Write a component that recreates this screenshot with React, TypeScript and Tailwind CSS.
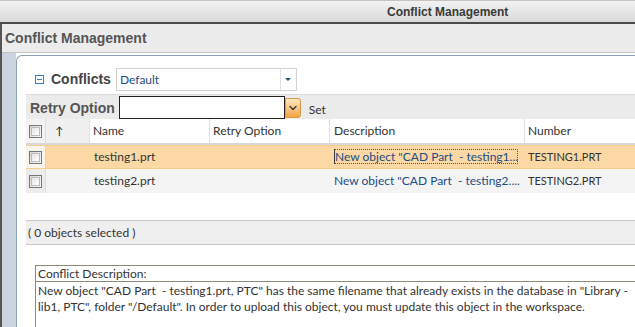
import { ChevronDown } from "lucide-react"

const rows = [
  { name: "testing1.prt", desc: 'New object "CAD Part  - testing1...', number: "TESTING1.PRT", selected: true },
  { name: "testing2.prt", desc: 'New object "CAD Part  - testing2....', number: "TESTING2.PRT", selected: false },
]

export default function App() {
  return (
    <div className="w-[635px] h-[327px] overflow-hidden bg-white flex flex-col font-['Liberation_Sans',Arial,sans-serif]">
      {/* window title */}
      <div className="h-[24px] shrink-0 bg-gradient-to-b from-[#f2f2f2] to-[#d9d9d9] border-t border-[#c4c4c4] border-b-2 border-b-[#4a4a4a] flex items-center pl-[387px] text-[12px] font-bold text-[#3a3a3a]">
        Conflict Management
      </div>

      <div className="flex-1 min-h-0 flex flex-col border-l-2 border-[#555]">
        <div className="h-[29px] shrink-0 bg-[#ececec] border-b border-[#c3c3c3] flex items-center pl-[3px] text-[14px] font-bold text-[#555]">
          Conflict Management
        </div>

        <div className="flex-1 min-h-0 flex">
          <div className="w-[14px] shrink-0 bg-[#cbd4de]" />
          <div className="flex-1 mt-[2px] bg-white border-l border-t border-[#8ea5bb] rounded-tl-[6px] pl-[9px] pt-[12px] flex flex-col">
            <ConflictsRow />
            <Toolbar />
            <Table />
            <div className="h-[27px] shrink-0" />
            <div className="h-[25px] shrink-0 bg-[#efefef] border-y border-[#c8c8c8] flex items-center pl-[2px] text-[12px] text-[#333] font-['Lato',sans-serif]">
              ( 0 objects selected )
            </div>
            <div className="h-[20px] shrink-0" />
            <DescriptionBox />
          </div>
        </div>
      </div>
    </div>
  )
}

function ConflictsRow() {
  return (
    <div className="h-[23px] shrink-0 flex items-center">
      <div className="ml-[9px] w-[9px] h-[9px] border border-[#3d7fb8] flex items-center justify-center">
        <div className="w-[5px] h-[1px] bg-[#3d7fb8]" />
      </div>
      <span className="ml-[7px] text-[14px] font-bold text-[#444]">Conflicts</span>
      <div className="ml-[5px] w-[181px] h-[23px] border border-[#d3d3d3] flex items-center">
        <span className="flex-1 pl-[3px] text-[12px] text-[#1d4f7d] font-['Lato',sans-serif]">Default</span>
        <div className="w-[16px] h-[21px] border-l border-[#e2e2e2] flex items-center justify-center">
          <div className="w-0 h-0 border-l-[3px] border-r-[3px] border-t-[3px] border-l-transparent border-r-transparent border-t-[#2b5579]" />
        </div>
      </div>
    </div>
  )
}

function Toolbar() {
  return (
    <div className="mt-[3px] h-[25px] shrink-0 bg-[#ebebeb] border-t border-[#dcdcdc] flex items-start">
      <span className="ml-[4px] mt-[4px] text-[14px] font-bold text-[#555] leading-[18px]">Retry Option</span>
      <div className="ml-[4px] mt-[1px] flex">
        <div className="w-[166px] h-[23px] bg-white border border-[#222]" />
        <div className="mt-[2px] w-[16px] h-[20px] rounded-r-[3px] bg-gradient-to-b from-[#fde7bd] to-[#f4a43f] border border-[#d99a4a] flex items-center justify-center">
          <ChevronDown className="w-[12px] h-[12px] text-[#333]" strokeWidth={2.5} />
        </div>
      </div>
      <span className="ml-[8px] mt-[6px] text-[12px] text-[#333] font-['Lato',sans-serif]">Set</span>
    </div>
  )
}

function Checkbox() {
  return (
    <div className="w-[13px] h-[13px] border border-[#777] bg-gradient-to-br from-[#d8d8d8] to-[#fafafa] p-[1px]">
      <div className="w-full h-full border border-[#bbb] bg-gradient-to-br from-[#e4e4e4] to-white" />
    </div>
  )
}

function Table() {
  const th = "h-full flex items-center pl-[3px] border-r border-[#e0e0e0] border-b-2 border-b-[#d8d8d8] text-[12px] text-[#333] font-['Lato',sans-serif]"
  return (
    <div className="flex flex-col shrink-0">
      <div className="h-[26px] flex bg-white">
        <div className="w-[20px] h-full flex items-center justify-center bg-[#f3f3f3] border-r border-[#ddd] border-b-2 border-b-[#d8d8d8]">
          <Checkbox />
        </div>
        <div className={`w-[44px] ${th} bg-[#f0f0f0] pl-[9px]`}>
          <span className="text-[11px] text-[#111]">↑</span>
        </div>
        <div className={`w-[120px] ${th}`}>Name</div>
        <div className={`w-[120px] ${th}`}>Retry Option</div>
        <div className={`w-[195px] ${th} pl-[4px]`}>Description</div>
        <div className={`flex-1 ${th} border-r-0`}>Number</div>
      </div>
      {rows.map((r) => (
        <div
          key={r.name}
          className={`h-[24px] flex items-center text-[12px] font-['Lato',sans-serif] ${r.selected ? "bg-[#fbd8a4] border-y border-[#f6cf8e]" : "bg-[#f4f4f4]"}`}
        >
          <div className={`w-[20px] h-full flex items-center justify-center border-r ${r.selected ? "bg-[#f9f4ec] border-[#f0d29c]" : "bg-[#ececec] border-[#dcdcdc]"}`}>
            <Checkbox />
          </div>
          <div className="w-[44px] shrink-0" />
          <div className="w-[120px] shrink-0 pl-[4px] text-[#333]">{r.name}</div>
          <div className="w-[120px] shrink-0" />
          <div className="w-[195px] shrink-0 pl-[4px] pr-[6px]">
            <span className={`whitespace-pre text-[#1d4d85] ${r.selected ? "border-l border-[#222] outline-1 outline-dotted outline-[#555] -outline-offset-1" : ""}`}>
              {r.desc}
            </span>
          </div>
          <div className="flex-1 pl-[3px] text-[11px] text-[#333]">{r.number}</div>
        </div>
      ))}
    </div>
  )
}

function DescriptionBox() {
  return (
    <div className="ml-[9px] flex-1 border-l border-t border-[#8b8b7a] text-[12px] text-[#333] font-['Lato',sans-serif]">
      <div className="h-[16px] pl-[2px] leading-[16px] border-b border-[#8b8b7a]">Conflict Description:</div>
      <div className="pl-[2px] pt-[1px] leading-[16px]">
        New object "CAD Part&nbsp; - testing1.prt, PTC" has the same filename that already exists in the database in "Library -
        lib1, PTC", folder "/Default". In order to upload this object, you must update this object in the workspace.
      </div>
    </div>
  )
}
